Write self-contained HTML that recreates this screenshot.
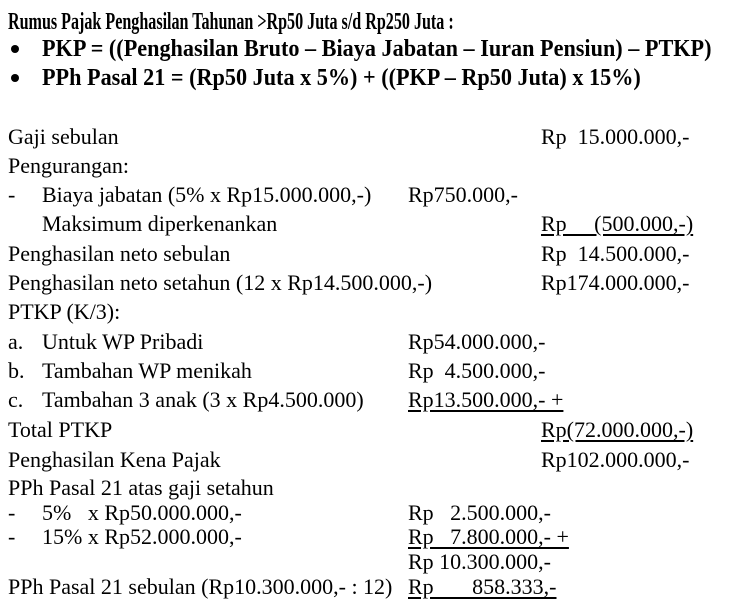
<!DOCTYPE html>
<html><head><meta charset="utf-8"><style>
body{margin:0;width:729px;height:606px;background:#fff;overflow:hidden;position:relative;font-family:"Liberation Serif",serif;color:#000}
.t{position:absolute;font-size:22px;line-height:22px;white-space:pre}
.h{position:absolute;font-weight:bold;white-space:pre;transform-origin:left center}
.h1{font-size:24px;line-height:26px;transform:scaleX(0.67)}
.h2{font-size:24px;line-height:26px;transform:scaleX(0.925)}
.b{position:absolute;width:8px;height:8px;border-radius:50%;background:#000}
u{text-decoration:underline;text-decoration-thickness:2px;text-underline-offset:3px}
</style></head><body>
<div class="h h1" style="left:8px;top:9px">Rumus Pajak Penghasilan Tahunan &gt;Rp50 Juta s/d Rp250 Juta :</div>
<div class="b" style="left:11px;top:45px"></div>
<div class="h h2" style="left:42px;top:36px">PKP = ((Penghasilan Bruto – Biaya Jabatan – Iuran Pensiun) – PTKP)</div>
<div class="b" style="left:11px;top:74px"></div>
<div class="h h2" style="left:42px;top:65px">PPh Pasal 21 = (Rp50 Juta x 5%) + ((PKP – Rp50 Juta) x 15%)</div>

<div class="t" style="left:8px;top:126px">Gaji sebulan</div>
<div class="t" style="left:541px;top:126px">Rp  15.000.000,-</div>
<div class="t" style="left:8px;top:155px">Pengurangan:</div>
<div class="t" style="left:8px;top:184px">-</div>
<div class="t" style="left:42px;top:184px">Biaya jabatan (5% x Rp15.000.000,-)</div>
<div class="t" style="left:408px;top:184px">Rp750.000,-</div>
<div class="t" style="left:42px;top:213px">Maksimum diperkenankan</div>
<div class="t" style="left:541px;top:213px"><u>Rp     (500.000,-)</u></div>
<div class="t" style="left:8px;top:243px">Penghasilan neto sebulan</div>
<div class="t" style="left:541px;top:243px">Rp  14.500.000,-</div>
<div class="t" style="left:8px;top:272px">Penghasilan neto setahun (12 x Rp14.500.000,-)</div>
<div class="t" style="left:541px;top:272px">Rp174.000.000,-</div>
<div class="t" style="left:8px;top:301px">PTKP (K/3):</div>
<div class="t" style="left:8px;top:331px">a.</div>
<div class="t" style="left:42px;top:331px">Untuk WP Pribadi</div>
<div class="t" style="left:408px;top:331px">Rp54.000.000,-</div>
<div class="t" style="left:8px;top:360px">b.</div>
<div class="t" style="left:42px;top:360px">Tambahan WP menikah</div>
<div class="t" style="left:408px;top:360px">Rp  4.500.000,-</div>
<div class="t" style="left:8px;top:389px">c.</div>
<div class="t" style="left:42px;top:389px">Tambahan 3 anak (3 x Rp4.500.000)</div>
<div class="t" style="left:408px;top:389px"><u>Rp13.500.000,- +</u></div>
<div class="t" style="left:8px;top:419px">Total PTKP</div>
<div class="t" style="left:541px;top:419px"><u>Rp(72.000.000,-)</u></div>
<div class="t" style="left:8px;top:449px">Penghasilan Kena Pajak</div>
<div class="t" style="left:541px;top:449px">Rp102.000.000,-</div>
<div class="t" style="left:8px;top:477px">PPh Pasal 21 atas gaji setahun</div>
<div class="t" style="left:8px;top:502px">-</div>
<div class="t" style="left:42px;top:502px">5%   x Rp50.000.000,-</div>
<div class="t" style="left:408px;top:502px">Rp   2.500.000,-</div>
<div class="t" style="left:8px;top:526px">-</div>
<div class="t" style="left:42px;top:526px">15% x Rp52.000.000,-</div>
<div class="t" style="left:408px;top:526px"><u>Rp   7.800.000,- +</u></div>
<div class="t" style="left:408px;top:551px">Rp 10.300.000,-</div>
<div class="t" style="left:8px;top:576px">PPh Pasal 21 sebulan (Rp10.300.000,- : 12)</div>
<div class="t" style="left:408px;top:576px"><u>Rp       858.333,-</u></div>
</body></html>
